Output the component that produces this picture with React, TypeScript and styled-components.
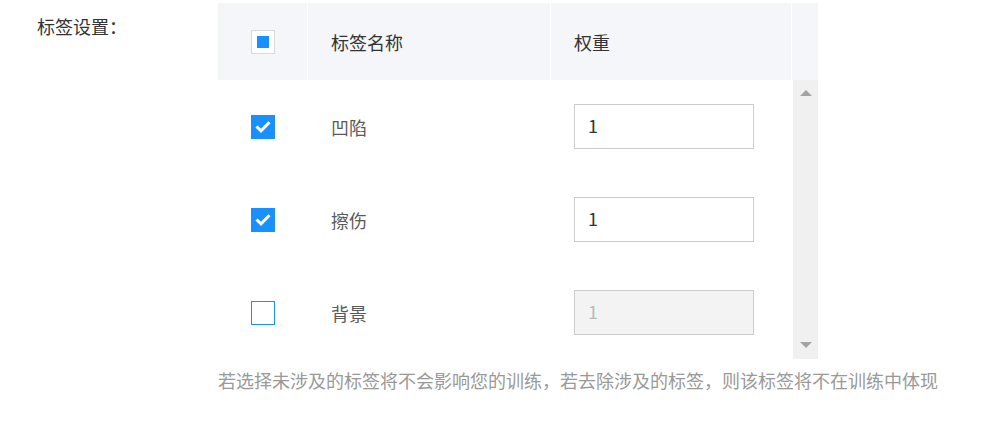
import React from "react";
import styled, { createGlobalStyle } from "styled-components";

const Global = createGlobalStyle`
  html, body { margin: 0; padding: 0; background: #fff; }
  body { font-family: "Noto Sans CJK SC", "Noto Sans", sans-serif; }
`;

const Page = styled.div`
  display: flex;
  align-items: flex-start;
  padding-top: 3px;
  width: 998px;
  height: 441px;
  box-sizing: border-box;
`;

const FieldLabel = styled.div`
  width: 218px;
  box-sizing: border-box;
  padding-left: 37px;
  padding-top: 10px;
  font-size: 18px;
  line-height: 26px;
  color: #333;
`;

const Content = styled.div`
  display: flex;
  flex-direction: column;
`;

const Table = styled.div`
  width: 600px;
  display: flex;
  flex-direction: column;
`;

const HeaderRow = styled.div`
  display: grid;
  grid-template-columns: 89px 242px 240px 26px;
  column-gap: 1px;
  background: #fff;
  height: 77px;
`;

const HeaderCell = styled.div<{ $center?: boolean }>`
  background: #f5f6fa;
  display: flex;
  align-items: center;
  justify-content: ${(p) => (p.$center ? "center" : "flex-start")};
  padding-left: ${(p) => (p.$center ? "0" : "23px")};
  font-size: 18px;
  color: #333;
`;

const Body = styled.div`
  display: flex;
  height: 279px;
`;

const Rows = styled.div`
  width: 575px;
  display: flex;
  flex-direction: column;
`;

const Row = styled.div`
  display: grid;
  grid-template-columns: 90px 243px 242px;
  height: 93px;
  align-items: center;
`;

const CheckCell = styled.div`
  display: flex;
  justify-content: center;
`;

const NameCell = styled.div`
  padding-left: 23px;
  font-size: 18px;
  color: #5a5a5a;
`;

const WeightCell = styled.div`
  padding-left: 23px;
  display: flex;
`;

const Box = styled.div<{ $checked?: boolean; $partial?: boolean }>`
  width: 24px;
  height: 24px;
  box-sizing: border-box;
  display: flex;
  align-items: center;
  justify-content: center;
  background: ${(p) => (p.$checked ? "#1890ff" : "#fff")};
  border: 1px solid
    ${(p) => (p.$checked ? "#1890ff" : p.$partial ? "#d9d9d9" : "#1890ff")};
  svg { flex: none; display: block; }
`;

const Partial = styled.span`
  width: 12px;
  height: 12px;
  background: #1890ff;
`;

const Input = styled.input`
  width: 180px;
  height: 45px;
  box-sizing: border-box;
  border: 1px solid #ccc;
  padding: 0 0 3px 13px;
  margin: 0;
  font-family: "Noto Sans CJK SC", "Noto Sans", sans-serif;
  font-size: 18px;
  color: #333;
  background: #fff;
  outline: none;
  &:disabled {
    background: #f3f3f3;
    color: #bbb;
  }
`;

const Scrollbar = styled.div`
  width: 25px;
  background: #f0f0f0;
  display: flex;
  flex-direction: column;
  justify-content: space-between;
  align-items: center;
  padding: 10px 0 11px;
  box-sizing: border-box;
`;

const Arrow = styled.span<{ $down?: boolean }>`
  width: 0;
  height: 0;
  border-left: 6px solid transparent;
  border-right: 6px solid transparent;
  ${(p) =>
    p.$down
      ? "border-top: 6px solid #a3a3a3;"
      : "border-bottom: 6px solid #a3a3a3;"}
`;

const Hint = styled.div`
  margin-top: 8px;
  font-size: 18px;
  line-height: 26px;
  color: #999;
  white-space: nowrap;
`;

const Check = () => (
  <svg width="22" height="22" viewBox="0 0 22 22">
    <path
      d="M4.5 10.5 L9 14.8 L17.5 6.3"
      fill="none"
      stroke="#fff"
      strokeWidth="3"
      strokeLinecap="butt"
      strokeLinejoin="miter"
    />
  </svg>
);

const data = [
  { name: "凹陷", checked: true, weight: "1" },
  { name: "擦伤", checked: true, weight: "1" },
  { name: "背景", checked: false, weight: "1" },
];

export default function App() {
  return (
    <>
      <Global />
      <Page>
        <FieldLabel>标签设置：</FieldLabel>
        <Content>
          <Table>
            <HeaderRow>
              <HeaderCell $center>
                <Box $partial>
                  <Partial />
                </Box>
              </HeaderCell>
              <HeaderCell>标签名称</HeaderCell>
              <HeaderCell>权重</HeaderCell>
              <HeaderCell $center />
            </HeaderRow>
            <Body>
              <Rows>
                {data.map((d) => (
                  <Row key={d.name}>
                    <CheckCell>
                      <Box $checked={d.checked}>{d.checked && <Check />}</Box>
                    </CheckCell>
                    <NameCell>{d.name}</NameCell>
                    <WeightCell>
                      <Input
                        defaultValue={d.weight}
                        disabled={!d.checked}
                      />
                    </WeightCell>
                  </Row>
                ))}
              </Rows>
              <Scrollbar>
                <Arrow />
                <Arrow $down />
              </Scrollbar>
            </Body>
          </Table>
          <Hint>
            若选择未涉及的标签将不会影响您的训练，若去除涉及的标签，则该标签将不在训练中体现
          </Hint>
        </Content>
      </Page>
    </>
  );
}
